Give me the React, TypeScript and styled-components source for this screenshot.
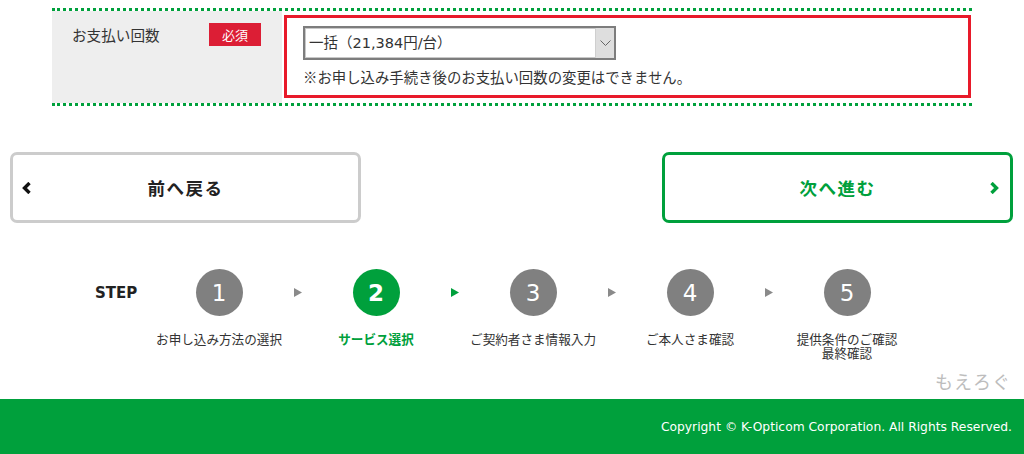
import React from "react";
import styled, { createGlobalStyle } from "styled-components";

const GREEN = "#00a03c";
const FONT = `"DejaVu Sans", "Noto Sans CJK JP", sans-serif`;

const GlobalStyle = createGlobalStyle`
  html, body { margin: 0; padding: 0; background: #fff; }
  body { font-family: ${FONT}; color: #333; }
  * { box-sizing: border-box; }
`;

const Page = styled.div`
  width: 1024px;
  height: 454px;
  display: flex;
  flex-direction: column;
  overflow: hidden;
`;

const FormRow = styled.div`
  margin: 8px 52px 0;
  border-top: 3px dotted ${GREEN};
  border-bottom: 3px dotted ${GREEN};
  display: flex;
  height: 98px;
`;

const LabelCell = styled.div`
  width: 230px;
  background: #eeeeee;
  display: flex;
  align-items: flex-start;
  padding: 12px 0 0 20px;
`;

const LabelText = styled.span`
  font-family: "Noto Sans CJK JP", sans-serif;
  font-size: 14.6px;
  line-height: 24px;
  color: #333;
  width: 137px;
`;

const Badge = styled.span`
  width: 52px;
  height: 23px;
  background: #dc1e35;
  color: #fff;
  font-family: "Noto Sans CJK JP", sans-serif;
  font-size: 13px;
  line-height: 23px;
  text-align: center;
`;

const ValueCell = styled.div`
  flex: 1;
  padding: 4px 1px 5px 2px;
  display: flex;
`;

const Highlight = styled.div`
  flex: 1;
  border: 3px solid #e81a2a;
  padding: 8px 16px 0;
  display: flex;
  flex-direction: column;
  gap: 6px;
`;

const SelectBox = styled.div`
  width: 313px;
  height: 34px;
  border: 2px solid #7d7d7d;
  box-shadow: inset 0 0 0 1px #c8c8c8;
  display: flex;
  align-items: stretch;
  background: #fff;
`;

const SelectValue = styled.span`
  flex: 1;
  padding-left: 4px;
  font-family: ${FONT};
  font-size: 14.5px;
  line-height: 30px;
  color: #333;
`;

const SelectArrow = styled.span`
  width: 19px;
  background: #dedede;
  border-left: 1px solid #cfcfcf;
  display: flex;
  align-items: center;
  justify-content: center;
`;

const Note = styled.p`
  margin: 0;
  font-family: "Noto Sans CJK JP", sans-serif;
  font-size: 14.4px;
  line-height: 22px;
  color: #333;
`;

const ButtonRow = styled.div`
  display: flex;
  justify-content: space-between;
  padding: 0 11px 0 10px;
  margin-top: 46px;
`;

const NavButton = styled.div<{ $primary?: boolean }>`
  position: relative;
  width: 351px;
  height: 71px;
  border: 3px solid ${(p) => (p.$primary ? GREEN : "#cccccc")};
  border-radius: 7px;
  display: flex;
  align-items: center;
  justify-content: center;
  background: #fff;
  color: ${(p) => (p.$primary ? GREEN : "#222")};
  font-family: "Noto Sans CJK JP", sans-serif;
  font-weight: 700;
  font-size: 17.5px;
  letter-spacing: 1.5px;
`;

const Chevron = styled.svg<{ $side: "left" | "right" }>`
  position: absolute;
  top: 50%;
  margin-top: -6px;
  ${(p) => (p.$side === "left" ? "left: 8px;" : "right: 10px;")}
`;

const StepBar = styled.div`
  display: flex;
  align-items: flex-start;
  padding-left: 95px;
  margin-top: 46px;
`;

const StepTitle = styled.div`
  width: 69px;
  height: 47px;
  display: flex;
  align-items: center;
  font-family: ${FONT};
  font-weight: 700;
  font-size: 15px;
  color: #222;
`;

const StepItem = styled.div`
  width: 110px;
  display: flex;
  flex-direction: column;
  align-items: center;
`;

const Circle = styled.div<{ $active?: boolean }>`
  width: 47px;
  height: 47px;
  border-radius: 50%;
  background: ${(p) => (p.$active ? GREEN : "#808080")};
  color: #fff;
  display: flex;
  align-items: center;
  justify-content: center;
  font-family: ${FONT};
  font-size: 23px;
  font-weight: ${(p) => (p.$active ? 700 : 400)};
`;

const StepLabel = styled.div<{ $active?: boolean }>`
  margin-top: 16px;
  white-space: nowrap;
  text-align: center;
  font-family: "Noto Sans CJK JP", sans-serif;
  font-size: 12.6px;
  line-height: 14px;
  font-weight: ${(p) => (p.$active ? 700 : 400)};
  color: ${(p) => (p.$active ? GREEN : "#333")};
`;

const StepArrow = styled.div`
  width: 47px;
  height: 47px;
  display: flex;
  align-items: center;
  justify-content: center;
`;

const Watermark = styled.div`
  margin-top: auto;
  text-align: right;
  padding-right: 13px;
  font-family: "Noto Sans CJK JP", sans-serif;
  font-size: 18px;
  line-height: 28px;
  color: #bdbdbd;
  letter-spacing: 1px;
  margin-bottom: 4px;
`;

const Footer = styled.footer`
  height: 55px;
  background: ${GREEN};
  display: flex;
  align-items: center;
  justify-content: flex-end;
  padding-right: 12px;
  color: #fff;
  font-family: ${FONT};
  font-size: 12.3px;
`;

const steps = [
  { n: "1", label: ["お申し込み方法の選択"] },
  { n: "2", label: ["サービス選択"], active: true },
  { n: "3", label: ["ご契約者さま情報入力"] },
  { n: "4", label: ["ご本人さま確認"] },
  { n: "5", label: ["提供条件のご確認", "最終確認"] },
];

export default function App() {
  return (
    <Page>
      <GlobalStyle />
      <FormRow>
        <LabelCell>
          <LabelText>お支払い回数</LabelText>
          <Badge>必須</Badge>
        </LabelCell>
        <ValueCell>
          <Highlight>
            <SelectBox>
              <SelectValue>一括（21,384円/台）</SelectValue>
              <SelectArrow>
                <svg width="11" height="7" viewBox="0 0 11 7">
                  <polyline points="0.5,0.5 5.5,5.5 10.5,0.5" fill="none" stroke="#666" strokeWidth="1" />
                </svg>
              </SelectArrow>
            </SelectBox>
            <Note>※お申し込み手続き後のお支払い回数の変更はできません。</Note>
          </Highlight>
        </ValueCell>
      </FormRow>

      <ButtonRow>
        <NavButton>
          <Chevron $side="left" width="11" height="12" viewBox="0 0 11 12">
            <polyline points="8.5,1 3.5,6 8.5,11" fill="none" stroke="#111" strokeWidth="3.4" />
          </Chevron>
          前へ戻る
        </NavButton>
        <NavButton $primary>
          次へ進む
          <Chevron $side="right" width="11" height="12" viewBox="0 0 11 12">
            <polyline points="2.5,1 7.5,6 2.5,11" fill="none" stroke={GREEN} strokeWidth="3.4" />
          </Chevron>
        </NavButton>
      </ButtonRow>

      <StepBar>
        <StepTitle>STEP</StepTitle>
        {steps.map((s, i) => (
          <React.Fragment key={s.n}>
            <StepItem>
              <Circle $active={s.active}>{s.n}</Circle>
              <StepLabel $active={s.active}>
                {s.label.map((l) => (
                  <div key={l}>{l}</div>
                ))}
              </StepLabel>
            </StepItem>
            {i < steps.length - 1 && (
              <StepArrow>
                <svg width="8" height="9" viewBox="0 0 8 9">
                  <polygon points="0,0 8,4.5 0,9" fill={steps[i].active ? GREEN : "#8a8a8a"} />
                </svg>
              </StepArrow>
            )}
          </React.Fragment>
        ))}
      </StepBar>

      <Watermark>もえろぐ</Watermark>
      <Footer>Copyright © K-Opticom Corporation. All Rights Reserved.</Footer>
    </Page>
  );
}
